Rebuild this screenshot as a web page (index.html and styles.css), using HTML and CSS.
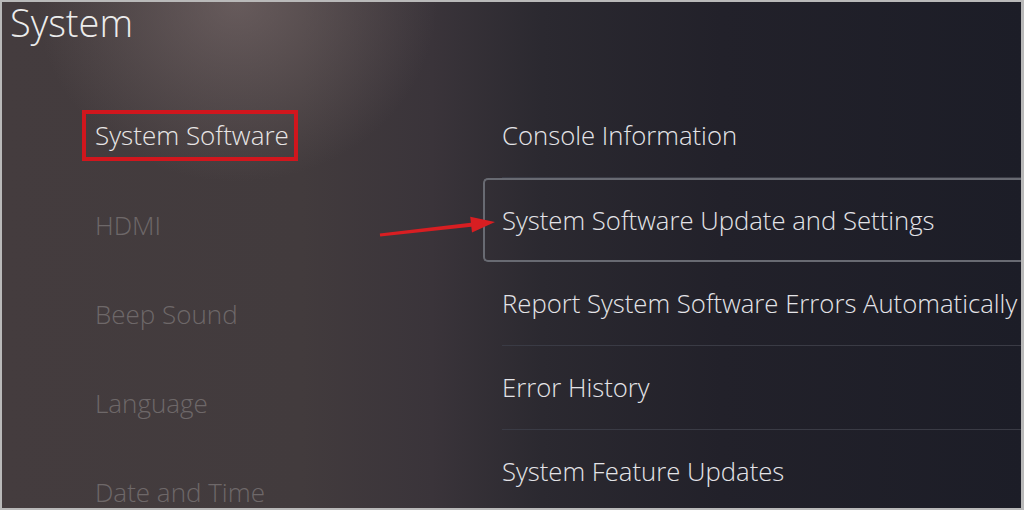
FILE: index.html
```html
<!DOCTYPE html>
<html lang="en">
<head>
<meta charset="utf-8">
<title>System</title>
<link rel="stylesheet" href="styles.css">
</head>
<body>
<div class="frame">
  <header class="header"><h1 class="title">System</h1></header>
  <div class="cols">
    <nav class="menu">
      <div class="menu-item active"><span class="mark">System Software</span></div>
      <div class="menu-item">HDMI</div>
      <div class="menu-item">Beep Sound</div>
      <div class="menu-item">Language</div>
      <div class="menu-item">Date and Time</div>
    </nav>
    <div class="options">
      <div class="row">Console Information</div>
      <div class="row focus">System Software Update and Settings</div>
      <div class="row">Report System Software Errors Automatically</div>
      <div class="row">Error History</div>
      <div class="row">System Feature Updates</div>
    </div>
  </div>
  <svg class="arrow" width="125" height="35" viewBox="0 0 125 35" aria-hidden="true">
    <polygon points="1.8,26.5 92.9,15.7 92.2,9.7 117,15 94,25.6 93.3,19.7 2.2,29.5" fill="#d81e22"/>
  </svg>
</div>
</body>
</html>
```

FILE: styles.css
```css
html, body {
  margin: 0;
  padding: 0;
  background: #b8b8b8;
}
.frame {
  position: relative;
  width: 1024px;
  height: 510px;
  box-sizing: border-box;
  border: 2px solid #b9b9b9;
  border-right-width: 3px;
  overflow: hidden;
  font-family: "Open Sans", "Noto Sans", sans-serif;
  background:
    radial-gradient(ellipse 200px 180px at 235px 0px, rgba(132,116,116,0.55), rgba(132,116,116,0) 100%),
    linear-gradient(90deg, #443c3e 0px, #423b3d 300px, #3a343a 430px, #2b2930 540px, #22212a 720px, #1c1d27 1024px);
}
.header {
  height: 48px;
  box-sizing: border-box;
  padding-top: 1px;
}
.title {
  margin: 0;
  padding-left: 8px;
  font-size: 38px;
  line-height: 38px;
  font-weight: 300;
  color: #ececec;
}
.cols {
  display: flex;
}
.menu {
  width: 388px;
  margin-left: 93px;
  padding-top: 41px;
  flex: none;
}
.menu-item {
  height: 89px;
  display: flex;
  align-items: center;
  font-size: 26px;
  font-weight: 300;
  color: #6e6869;
  white-space: nowrap;
}
.menu-item.active {
  color: #e8e6e6;
}
.mark {
  display: inline-block;
  margin-left: -13px;
  padding: 8px 5px 8px 9px;
  line-height: 27px;
  border: 4px solid #d1161d;
}
.options {
  flex: 1;
  padding-top: 44px;
  min-width: 0;
}
.row {
  height: 84px;
  box-sizing: border-box;
  margin-left: 19px;
  display: flex;
  align-items: center;
  font-size: 25.7px;
  font-weight: 300;
  color: #e4e4e8;
  white-space: nowrap;
  border-bottom: 1px solid #3a3b45;
}
.row.focus {
  margin-left: 0;
  padding-left: 17px;
  border: 2px solid #686a72;
  border-right: none;
  border-radius: 5px 0 0 5px;
}
.arrow {
  position: absolute;
  left: 376px;
  top: 205px;
}
```
